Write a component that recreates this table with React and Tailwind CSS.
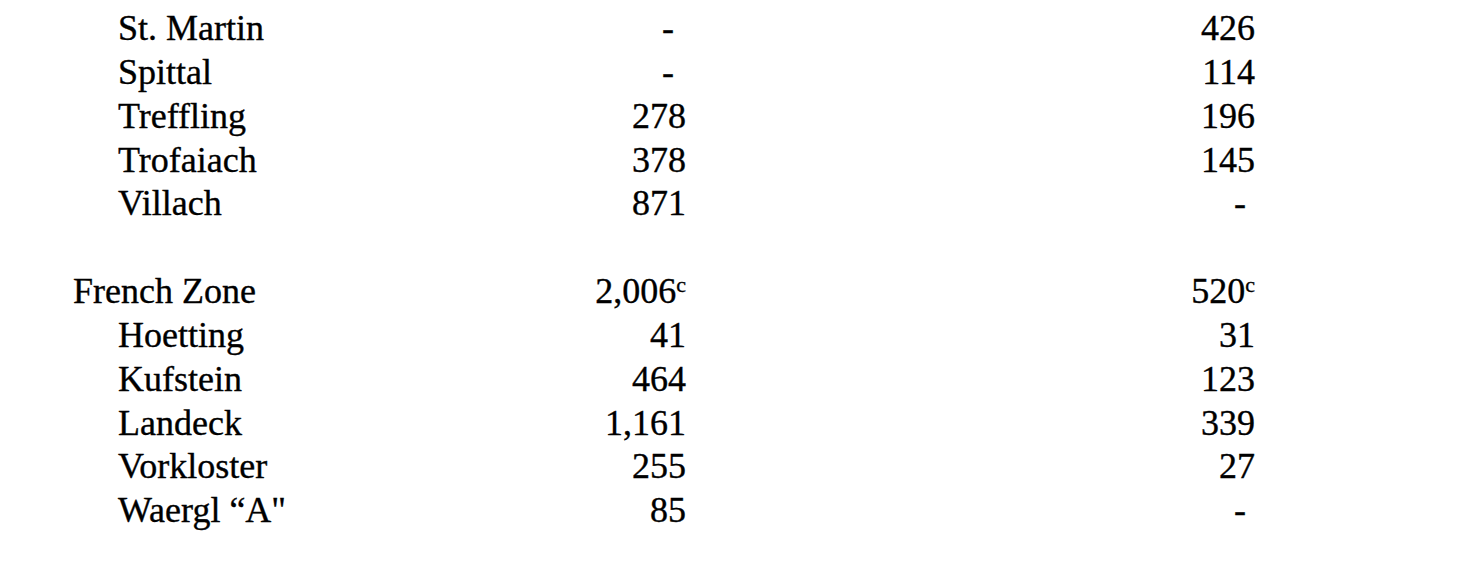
import React from "react";

const rows = [
  { name: "St. Martin", indent: true, a: "-", b: "426" },
  { name: "Spittal", indent: true, a: "-", b: "114" },
  { name: "Treffling", indent: true, a: "278", b: "196" },
  { name: "Trofaiach", indent: true, a: "378", b: "145" },
  { name: "Villach", indent: true, a: "871", b: "-" },
  { blank: true },
  { name: "French Zone", indent: false, a: "2,006", aSup: "c", b: "520", bSup: "c" },
  { name: "Hoetting", indent: true, a: "41", b: "31" },
  { name: "Kufstein", indent: true, a: "464", b: "123" },
  { name: "Landeck", indent: true, a: "1,161", b: "339" },
  { name: "Vorkloster", indent: true, a: "255", b: "27" },
  { name: "Waergl \u201CA\"", indent: true, a: "85", b: "-" },
];

function Cell({ value, sup, dashPad }) {
  if (value === "-") {
    return <span className={dashPad}>-</span>;
  }
  return (
    <span>
      {value}
      {sup && <sup className="text-[22px]">{sup}</sup>}
    </span>
  );
}

export default function App() {
  return (
    <div
      className="w-[1467px] h-[576px] bg-white text-black overflow-hidden [-webkit-text-stroke:0.35px_#000]"
      style={{ fontFamily: '"Liberation Serif", "Times New Roman", serif' }}
    >
      <div className="pt-[7px] pl-[73px] grid grid-cols-[467px_146px_569px] text-[36px] leading-[43.85px]">
        {rows.map((r, i) =>
          r.blank ? (
            <React.Fragment key={i}>
              <div className="h-[43.85px]" />
              <div />
              <div />
            </React.Fragment>
          ) : (
            <React.Fragment key={i}>
              <div className={r.indent ? "pl-[45px]" : ""}>{r.name}</div>
              <div className="text-right">
                <Cell value={r.a} sup={r.aSup} dashPad="pr-[12px]" />
              </div>
              <div className="text-right">
                <Cell value={r.b} sup={r.bSup} dashPad="pr-[9px]" />
              </div>
            </React.Fragment>
          )
        )}
      </div>
    </div>
  );
}
